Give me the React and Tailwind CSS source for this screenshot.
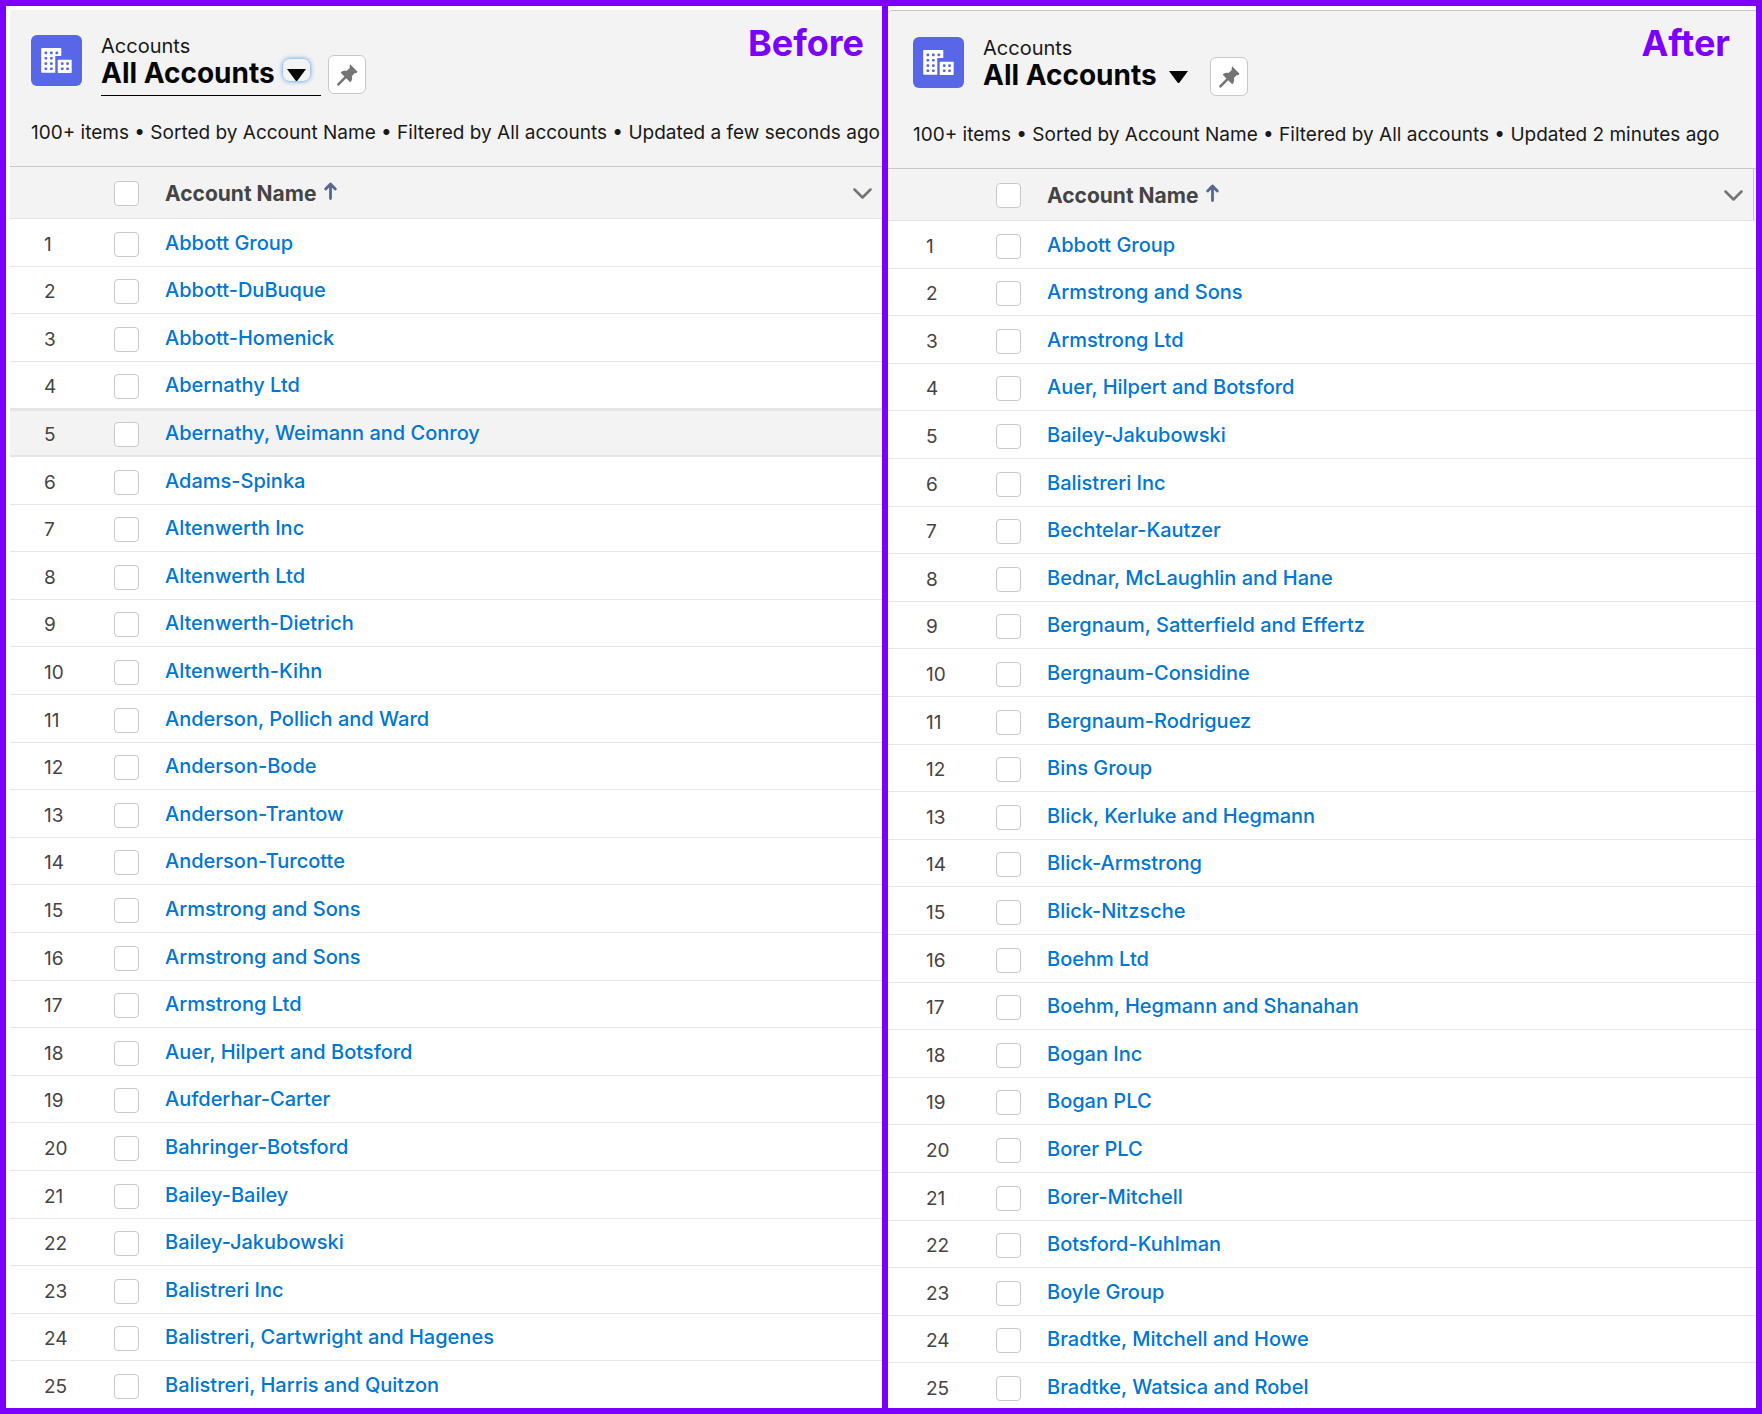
const beforeAccounts = [
  "Abbott Group",
  "Abbott-DuBuque",
  "Abbott-Homenick",
  "Abernathy Ltd",
  "Abernathy, Weimann and Conroy",
  "Adams-Spinka",
  "Altenwerth Inc",
  "Altenwerth Ltd",
  "Altenwerth-Dietrich",
  "Altenwerth-Kihn",
  "Anderson, Pollich and Ward",
  "Anderson-Bode",
  "Anderson-Trantow",
  "Anderson-Turcotte",
  "Armstrong and Sons",
  "Armstrong and Sons",
  "Armstrong Ltd",
  "Auer, Hilpert and Botsford",
  "Aufderhar-Carter",
  "Bahringer-Botsford",
  "Bailey-Bailey",
  "Bailey-Jakubowski",
  "Balistreri Inc",
  "Balistreri, Cartwright and Hagenes",
  "Balistreri, Harris and Quitzon",
];

const afterAccounts = [
  "Abbott Group",
  "Armstrong and Sons",
  "Armstrong Ltd",
  "Auer, Hilpert and Botsford",
  "Bailey-Jakubowski",
  "Balistreri Inc",
  "Bechtelar-Kautzer",
  "Bednar, McLaughlin and Hane",
  "Bergnaum, Satterfield and Effertz",
  "Bergnaum-Considine",
  "Bergnaum-Rodriguez",
  "Bins Group",
  "Blick, Kerluke and Hegmann",
  "Blick-Armstrong",
  "Blick-Nitzsche",
  "Boehm Ltd",
  "Boehm, Hegmann and Shanahan",
  "Bogan Inc",
  "Bogan PLC",
  "Borer PLC",
  "Borer-Mitchell",
  "Botsford-Kuhlman",
  "Boyle Group",
  "Bradtke, Mitchell and Howe",
  "Bradtke, Watsica and Robel",
];

const AccountIcon = () => (
  <svg viewBox="0 0 51 51" className="size-[51px] shrink-0 rounded-md bg-[#5867e8]" aria-hidden="true">
    <path fill="#fff" d="M11 13h18.500a.8.8 0 0 1 .8.8V21h-6v16.800H11a.8.8 0 0 1-.8-.8V13.800a.8.8 0 0 1 .8-.8z" />
    <rect x="26.700" y="24.700" width="14" height="13.300" rx=".7" fill="#fff" />
    <g fill="#5867e8">
      {[16.6, 21.9, 27.2, 32.4].map((y) => (
        <g key={y}>
          <rect x="13.500" y={y} width="2.700" height="2.700" rx=".8" />
          <rect x="19" y={y} width="2.700" height="2.700" rx=".8" />
        </g>
      ))}
      <rect x="24.500" y="16.600" width="2.700" height="2.700" rx=".8" />
      <rect x="29.900" y="27.200" width="2.700" height="2.700" rx=".8" />
      <rect x="35.200" y="27.200" width="2.700" height="2.700" rx=".8" />
      <rect x="29.900" y="32.400" width="2.700" height="2.700" rx=".8" />
      <rect x="35.200" y="32.400" width="2.700" height="2.700" rx=".8" />
    </g>
  </svg>
);

const PinIcon = () => (
  <svg viewBox="0 0 22 22" className="size-[22px]" fill="#747474" aria-hidden="true">
    <path d="M13.700.9c.3-.4.800-.4 1.100 0l6.300 6.300c.4.400.3.900 0 1.100l-.7.600c-.5.400-1.100.4-1.600.1l-3 3.300c.7 1.800.4 3.900-1 5.500-.4.400-.8.400-1.100 0l-3.500-3.500-6.900 7c-.5.500-1.300.5-1.800 0s-.5-1.300 0-1.800l6.900-7-3.200-3.300c-.4-.4-.3-.8 0-1.100 1.500-1.300 3.500-1.600 5.300-1l3.300-3.200c-.4-.6-.3-1.200.1-1.700z" />
  </svg>
);

const SortArrow = () => (
  <svg viewBox="0 0 13 18" className="mb-1.5 ml-2 h-[18px] w-[13px]" fill="none" stroke="#54698d" strokeWidth="2.800" strokeLinecap="round" strokeLinejoin="round" aria-hidden="true">
    <path d="M6.500 16.500V3M1.700 7l4.800-5 4.800 5" />
  </svg>
);

const Checkbox = ({ label }) => (
  <input
    type="checkbox"
    aria-label={label}
    className="block size-[25px] appearance-none rounded-[4px] border border-[#c9c9c9] bg-white"
  />
);

const HeaderCell = ({ className, children }) => (
  <th className={`border-y border-t-[#c9c9c9] border-b-[#e5e5e5] p-0 ${className}`}>{children}</th>
);

const AccountList = ({
  label,
  accounts,
  updated,
  focused,
  hoveredRow,
  className,
  headerClassName,
  labelClassName,
  numberClassName,
  lastColumnClassName,
}) => (
  <section className={`overflow-hidden pt-1 ${className}`}>
    <header className={`bg-[#f3f3f3] ${headerClassName}`}>
      <div className="flex items-start">
        <AccountIcon />
        <div className="ml-[19px]">
          <p className="h-5 text-[20px] leading-[22px] text-[#181818]">Accounts</p>
          <div className="flex items-start">
            <div className={`flex h-[41px] items-start border-b pr-2.5 ${focused ? "border-black" : "border-transparent"}`}>
              <h1 className="text-[28px] leading-9 font-bold text-[#080707]">All Accounts</h1>
              <button
                type="button"
                aria-label="Select a list view"
                className={`mt-[3px] ml-[7px] flex h-6 w-[29px] items-end justify-center rounded-lg border ${focused ? "border-[#a5c8ef] shadow-[0_0_4px_#7db2ec]" : "border-transparent"}`}
              >
                <svg viewBox="0 0 19 12" className="h-3 w-[19px]" aria-hidden="true">
                  <path d="M0 0h19l-8.500 11.500q-1 1-2 0z" fill="#080707" />
                </svg>
              </button>
            </div>
            <button
              type="button"
              aria-label="Pin this list view"
              className="ml-[7px] flex h-[39px] w-[38px] items-center justify-center rounded-md border border-[#c9c9c9] bg-white"
            >
              <PinIcon />
            </button>
          </div>
        </div>
        <h2 className={`ml-auto text-[36px] leading-9 font-bold text-[#7b00ff] ${labelClassName}`}>{label}</h2>
      </div>
      <p className="mt-[25px] text-[19px] leading-6 whitespace-nowrap text-[#181818]">
        100+ items • Sorted by Account Name • Filtered by All accounts • Updated {updated}
      </p>
    </header>

    <table className="w-full table-fixed border-separate border-spacing-0 text-left">
      <thead>
        <tr className="h-[53px] bg-[#f3f3f3] text-[#444]">
          <HeaderCell className={numberClassName} />
          <HeaderCell className="w-[51px]">
            <div className="pt-0.5">
              <Checkbox label="Select all accounts" />
            </div>
          </HeaderCell>
          <HeaderCell>
            <div className={`flex h-[51px] items-center pt-0.5 ${lastColumnClassName}`}>
              <span className="text-[21px] leading-6 font-bold">Account Name</span>
              <SortArrow />
              <button type="button" aria-label="Show Account Name column actions" className="ml-auto">
                <svg viewBox="0 0 19 11" className="h-[11px] w-[19px]" fill="none" stroke="#747474" strokeWidth="2.500" strokeLinecap="round" strokeLinejoin="round" aria-hidden="true">
                  <path d="M1.500 1.500l8 8 8-8" />
                </svg>
              </button>
            </div>
          </HeaderCell>
        </tr>
      </thead>
      <tbody>
        {accounts.map((name, index) => {
          const cell = index + 1 === hoveredRow ? "border-y-2 border-[#e5e5e5] bg-[#f3f3f3]" : "border-b border-[#e5e5e5]";
          return (
            <tr key={index} className="h-12 nth-[5n+2]:h-[47px] nth-[5n+4]:h-[47px]">
              <td className={`pt-1 text-[19px] leading-6 text-[#444] ${numberClassName} ${cell}`}>{index + 1}</td>
              <td className={`pt-[3px] ${cell}`}>
                <Checkbox label={`Select ${name}`} />
              </td>
              <td className={`text-[20px] leading-6 font-medium ${cell}`}>
                <a href="#" className="text-[#0176d3]">{name}</a>
              </td>
            </tr>
          );
        })}
      </tbody>
    </table>
  </section>
);

const App = () => (
  <main className="flex h-screen border-6 border-[#7b00ff] bg-white font-['Inter',sans-serif]">
    <AccountList
      label="Before"
      accounts={beforeAccounts}
      updated="a few seconds ago"
      focused
      hoveredRow={5}
      className="w-[calc(50%+7px)] border-r-6 border-[#7b00ff] pl-1"
      headerClassName="h-39 pt-[25px] pl-[21px]"
      labelClassName="-mt-2.5 pr-[18px]"
      numberClassName="w-26 pl-[34px]"
      lastColumnClassName="pr-2.5"
    />
    <AccountList
      label="After"
      accounts={afterAccounts}
      updated="2 minutes ago"
      className="flex-1"
      headerClassName="h-[158px] rounded-tl border-t border-[#c9c9c9] pt-[26px] pl-[25px]"
      labelClassName="-mt-3 pr-[26px]"
      numberClassName="w-[108px] pl-[38px]"
      lastColumnClassName="mr-0.5 border-r border-[#c9c9c9] pr-2.5"
    />
  </main>
);

export default App;
